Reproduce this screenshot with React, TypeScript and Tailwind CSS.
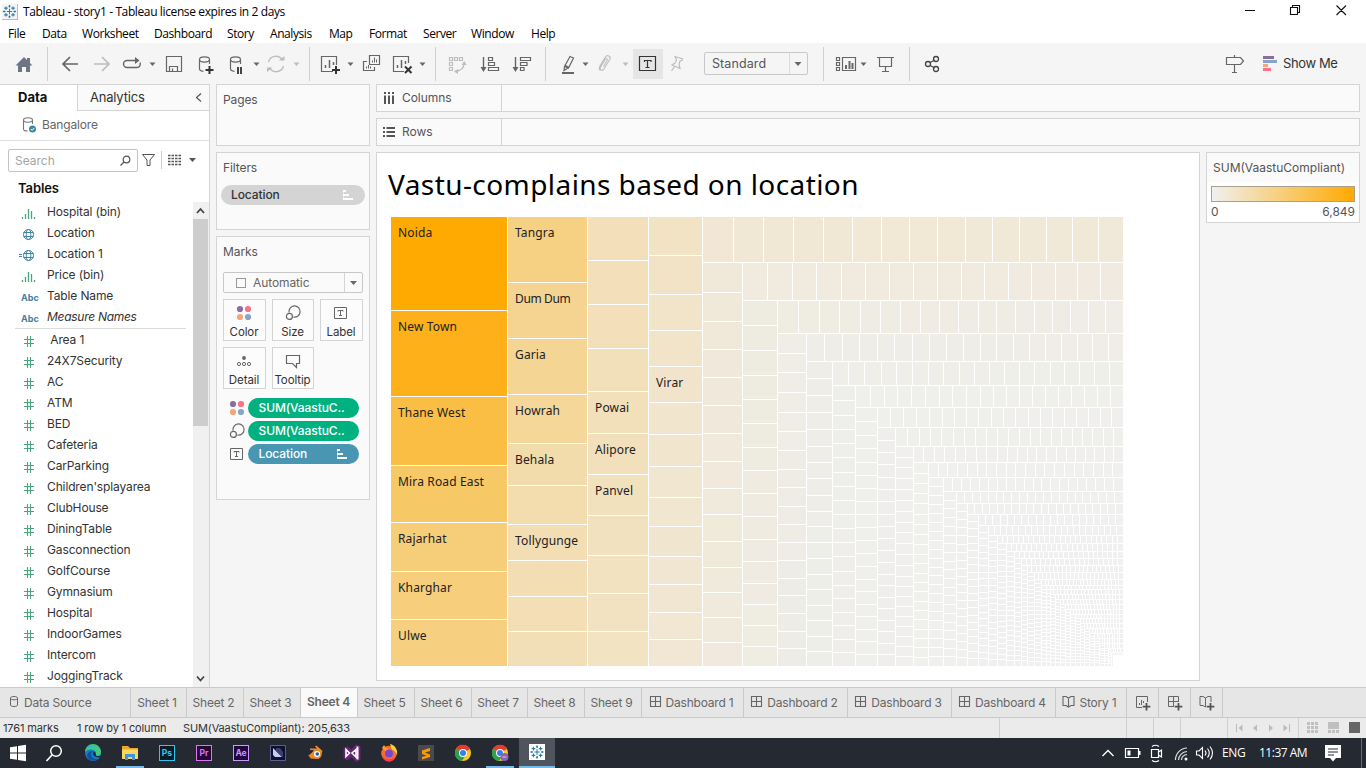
import React from "react";

type Kids = { children?: React.ReactNode };

/* ---------- shared pieces ---------- */

/* Icon cell whose drawing uses window coordinates: x..x+w by y..y+h. */
function Cell({ x, w, y = 43, h = 41, children }: { x: number; w: number; y?: number; h?: number } & Kids) {
  return (
    <svg width={w} height={h} viewBox={`${x} ${y} ${w} ${h}`} fill="none" className="block shrink-0">
      {children}
    </svg>
  );
}

const Caret = ({ x, y = 64, c = "#666" }: { x: number; y?: number; c?: string }) => (
  <path d={`M${x - 3} ${y - 1.5}h6l-3 3.5z`} fill={c} />
);

function TableauMark({ c }: { c: string }) {
  return (
    <g stroke={c} strokeWidth="1.2" fill="none">
      <path d="M8 5v6M5 8h6M8 0.5v3M6.8 2h2.4M8 12.5v3M6.8 14h2.4M0.5 8h3M2 6.8v2.4M12.5 8h3M14 6.8v2.4M4 2.2v4M2 4.2h4M12 2.2v4M10 4.2h4M4 9.8v4M2 11.8h4M12 9.8v4M10 11.8h4" />
    </g>
  );
}

function SortGlyph({ c }: { c: string }) {
  return (
    <svg width="12" height="10" viewBox="0 0 12 10" fill={c} className="block">
      <path d="M1 0h3v2H1zM1 4h6v2H1zM1 8h10v2H1z" />
      <path d="M1 0h1v10H1z" opacity=".5" />
    </svg>
  );
}

const FourDots = () => (
  <svg width="16" height="16" viewBox="0 0 16 16" className="block">
    <circle cx="4" cy="4" r="3.1" fill="#8b6f9b" />
    <circle cx="12" cy="4" r="3.1" fill="#fb7185" />
    <circle cx="4" cy="12" r="3.1" fill="#f2a679" />
    <circle cx="12" cy="12" r="3.1" fill="#86a5cc" />
  </svg>
);
const SizeGlyph = () => (
  <svg width="16" height="16" viewBox="0 0 16 16" fill="none" stroke="#666" strokeWidth="1.2" className="block">
    <path d="M4 7.5A5.6 5.6 0 1 1 8.3 12" />
    <circle cx="4.4" cy="11.4" r="3" />
  </svg>
);
const TextGlyph = () => (
  <svg width="16" height="16" viewBox="0 0 16 16" fill="none" stroke="#666" className="block">
    <path d="M1.5 2.5h12v11h-12z" />
    <path d="M5 6.5v-1h5v1M7.5 5.5v5M6 10.5h3" />
  </svg>
);

/* ---------- toolbar ---------- */

const Sep = () => <div className="mt-1 h-[34px] w-px shrink-0 bg-[#d0d0d0]" />;

function Cylinder({ x }: { x: number }) {
  return (
    <path
      d={`M${x} 59.5c0-3.4 10-3.4 10 0s-10 3.4-10 0v9.5c0 1.4 1.7 2 4 2.3M${x + 10} 59.5v4.5`}
      stroke="#666"
      strokeWidth="1.2"
    />
  );
}

function Toolbar() {
  const g = "#666";
  const l = "#bdbdbd";
  return (
    <div className="flex h-[41px] shrink-0 bg-[#f5f5f5]">
      <Cell x={0} w={47}>
        <path d="M15.500 65.500l8.500-8.500 3 3v-2h3v5l2.500 2.500h-2.500v6.500h-4v-5h-4v5h-4v-6.500z" fill="#6e7683" />
      </Cell>
      <Sep />
      <Cell x={48} w={70}>
        <path d="M78 64H63.500M70 57l-7 7 7 7" stroke={g} strokeWidth="1.700" />
        <path d="M94 64h14.500M102 57l7 7-7 7" stroke={l} strokeWidth="1.700" />
      </Cell>
      <Cell x={118} w={42}>
        <path d="M136 60.500h-9a3.500 3.500 0 0 0 0 7h10a3.500 3.500 0 0 0 3-5" stroke={g} strokeWidth="1.400" />
        <path d="M135 57l4.500 3.500L135 64z" fill={g} />
        <Caret x={152.500} />
      </Cell>
      <Cell x={160} w={32}>
        <path d="M166.500 56.500h15v15h-15zM169.500 71v-4.500h8V71M172.500 68.500v3" stroke={g} strokeWidth="1.200" />
      </Cell>
      <Cell x={192} w={32}>
        <Cylinder x={199.500} />
        <path d="M209.500 66v8M205.500 70h8" stroke="#333" strokeWidth="2" />
      </Cell>
      <Cell x={224} w={38}>
        <Cylinder x={230.500} />
        <path d="M238 67v7M241 67v7" stroke="#333" strokeWidth="1.800" />
        <Caret x={256.500} />
      </Cell>
      <Cell x={262} w={47}>
        <path d="M268.500 62a7.500 7.500 0 0 1 14-1.500M283.500 66a7.500 7.500 0 0 1-14 1.500" stroke={l} strokeWidth="1.400" />
        <path d="M279 60.500h5.500V56zM272.500 67.500H267V72z" fill={l} />
        <Caret x={296.500} c={l} />
      </Cell>
      <Sep />
      <Cell x={310} w={48}>
        <path d="M333 71.500h-11.500v-15h15V65" stroke={g} strokeWidth="1.200" />
        <path d="M325.500 68v-3M329.500 68v-8M333.500 65v-3" stroke={g} strokeWidth="1.500" />
        <path d="M336 66v8M332 70h8" stroke="#333" strokeWidth="2" />
        <Caret x={350.500} />
      </Cell>
      <Cell x={358} w={30}>
        <path d="M369.500 55.500h10v9h-10zM367 61.500h-3.500v9h11V67" stroke={g} strokeWidth="1.200" />
        <path d="M372.500 62.500v-2M374.500 62.500v-5M376.500 62.500v-3M366.500 68.500v-2M368.500 68.500v-3.500M370.500 68.500v-2" stroke={g} />
      </Cell>
      <Cell x={388} w={47}>
        <path d="M404 71.500h-10.500v-15h15V63" stroke={g} strokeWidth="1.200" />
        <path d="M397.500 68v-3M401.500 68v-8M405.500 64v-3" stroke={g} strokeWidth="1.500" />
        <path d="M405 66.500l6.500 6.500M411.500 66.500L405 73" stroke="#333" strokeWidth="2" />
        <Caret x={422.500} />
      </Cell>
      <Sep />
      <Cell x={436} w={37}>
        <path d="M449.500 57.500h3v3h-3zM454.500 57.500h3v3h-3zM459.500 57.500h3v3h-3zM449.500 62.500h3v3h-3zM449.500 67.500h3v3h-3z" stroke={l} strokeWidth="1.200" />
        <path d="M464 63c0 5-3 8-9 8.500" stroke={l} strokeWidth="1.300" />
        <path d="M464.200 61l2.500 4h-5zM454 71.500l4-2.500v5z" fill={l} />
      </Cell>
      <Cell x={473} w={33}>
        <path d="M483.500 57v12" stroke={g} strokeWidth="1.400" />
        <path d="M480.500 67h6l-3 5z" fill={g} />
        <path d="M488.500 57.500h4v3h-4zM488.500 62.500h6v3h-6zM488.500 67.500h10v3h-10z" stroke={g} strokeWidth="1.200" />
      </Cell>
      <Cell x={506} w={39}>
        <path d="M515.500 57v12" stroke={g} strokeWidth="1.400" />
        <path d="M512.500 67h6l-3 5z" fill={g} />
        <path d="M520.500 57.500h10v3h-10zM520.500 62.500h6.500v3h-6.500zM520.500 67.500h3.500v3h-3.500z" stroke={g} strokeWidth="1.200" />
      </Cell>
      <Sep />
      <Cell x={546} w={46}>
        <path d="M562 73h12" stroke={g} strokeWidth="2" />
        <path d="M564.500 66.500l5.500-10 3.500 1.500-5 10zM564.500 66.500l-.5 4 4-2.500M564.500 65l4.500 2.500" stroke={g} strokeWidth="1.200" />
        <Caret x={585.500} />
      </Cell>
      <Cell x={592} w={41}>
        <path
          d="M603.500 66.500l3.700-6.300c.8-1.500-1-2.400-1.900-.9l-4.800 8c-1.300 2.600 1.900 4.200 3.400 1.700l5.800-9.500c1.700-3.400-2.500-5.300-4.300-2.500l-5.600 9.200c-.8 1.700-.6 3.300.3 4.300"
          stroke={l}
          strokeWidth="1.100"
        />
        <Caret x={625.500} c={l} />
      </Cell>
      <div className="mt-[6px] h-[30px] w-[30px] shrink-0 bg-[#e5e5e5]">
        <Cell x={633} w={30} y={49} h={30}>
          <path d="M639.500 56.500h16v14h-16z" stroke="#333" strokeWidth="1.200" />
          <path d="M644.500 62v-1.500h6.500V62M647.500 60.500v7M645.500 67.500h4" stroke="#333" strokeWidth="1.200" />
        </Cell>
      </div>
      <Cell x={663} w={41}>
        <path d="M675 56.500l7.500 2.500-.5 1.500-2 .5-1 3.500 1 4-8-3.500 3-2 1.500-3zM674.500 66.500l-3 4.500" stroke={l} strokeWidth="1.200" />
      </Cell>
      <div className="mt-[9px] flex h-[23px] w-[104px] shrink-0 rounded-[2px] border border-[#c8c8c8] bg-[#f5f5f5]">
        <div className="w-[85px] border-r border-[#dcdcdc] pl-[7px] font-[Inter] text-[12.5px] leading-[21px] tracking-[0.1px] text-[#555]">Standard</div>
        <Cell x={790} w={16} y={53} h={21}>
          <path d="M794.500 62h7l-3.500 4z" fill="#666" />
        </Cell>
      </div>
      <div className="w-[15px] shrink-0" />
      <Sep />
      <Cell x={824} w={46}>
        <path d="M836.500 57.500h3v3h-3zM836.500 62.500h3v3h-3zM836.500 67.500h3v3h-3zM842.500 57.500h13v13h-13z" stroke={g} strokeWidth="1.200" />
        <path d="M846 69v-4M849.500 69v-8M852.500 69v-6" stroke={g} strokeWidth="2" />
        <Caret x={863.500} />
      </Cell>
      <Cell x={870} w={39}>
        <path d="M877 57.500h17M879.500 58v8.500h12V58M885.500 66.500V71M882 71.500h7" stroke={g} strokeWidth="1.200" />
      </Cell>
      <Sep />
      <Cell x={910} w={40}>
        <path d="M930 62.500l5-2.500M930 65.500l5 2.500" stroke="#444" strokeWidth="1.300" />
        <circle cx="928" cy="64" r="2.500" stroke="#444" strokeWidth="1.300" />
        <circle cx="936" cy="59" r="2.500" stroke="#444" strokeWidth="1.300" />
        <circle cx="936" cy="69" r="2.500" stroke="#444" strokeWidth="1.300" />
      </Cell>
      <div className="grow" />
      <Cell x={1216} w={67}>
        <path d="M1226.500 57.500h14l3 3.500-3 3.500h-14zM1234.500 55v2M1234.500 65v7M1232 72.500h5" stroke={g} strokeWidth="1.200" />
        <path d="M1263 56h11v3h-11z" fill="#8b6f9b" />
        <path d="M1263 60h14v3h-14z" fill="#86a5cc" />
        <path d="M1263 64h5v3h-5z" fill="#f2a679" />
        <path d="M1263 68h8v3h-8z" fill="#fb7185" />
      </Cell>
      <div className="w-[83px] shrink-0 font-[Inter] text-[13px] leading-[41px] tracking-[-0.400px] text-[#333]">Show Me</div>
    </div>
  );
}

/* ---------- data pane ---------- */

type FieldKind = "bins" | "globe" | "eqglobe" | "abc" | "hash";

function FieldIcon({ kind }: { kind: FieldKind }) {
  if (kind === "abc")
    return <span className="w-[29px] pt-[3px] pl-[3px] font-[Inter] text-[9px] leading-[16px] font-bold text-[#3f809f]">Abc</span>;
  return (
    <svg width="29" height="16" viewBox="18 0 29 16" fill="none" className="block shrink-0">
      {kind === "bins" && (
        <path d="M22.500 12v2M25.500 9v5M28.500 4v10M31.500 6v8M34.500 12v2" stroke="#4aa57f" strokeWidth="1.300" />
      )}
      {(kind === "globe" || kind === "eqglobe") && (
        <g stroke="#3f87a6">
          <circle cx="28.500" cy="8.500" r="5" />
          <ellipse cx="28.500" cy="8.500" rx="2.300" ry="5" />
          <path d="M23.500 6.500h10M23.500 10.500h10" />
          {kind === "eqglobe" && <path d="M19 7.500h3M19 9.500h3" />}
        </g>
      )}
      {kind === "hash" && <path d="M27.500 3v11M30.500 3v11M24 6.500h10M24 10.500h10" stroke="#4aa57f" strokeWidth="1.100" />}
    </svg>
  );
}

const dimensions: [FieldKind, string][] = [
  ["bins", "Hospital (bin)"],
  ["globe", "Location"],
  ["eqglobe", "Location 1"],
  ["bins", "Price (bin)"],
  ["abc", "Table Name"],
  ["abc", "Measure Names"],
];
const measures = [
  "\u00a0Area 1", "24X7Security", "AC", "ATM", "BED", "Cafeteria", "CarParking", "Children'splayarea", "ClubHouse",
  "DiningTable", "Gasconnection", "GolfCourse", "Gymnasium", "Hospital", "IndoorGames", "Intercom", "JoggingTrack",
];

function Field({ kind, name }: { kind: FieldKind; name: string }) {
  return (
    <div className="flex h-[21px] items-center pl-[18px]">
      <FieldIcon kind={kind} />
      <span
        className={`pb-[2px] font-[Inter] text-[12px] text-[#333] ${name === "Measure Names" ? "tracking-[-0.280px] italic" : "tracking-[-0.130px]"}`}
      >
        {name}
      </span>
    </div>
  );
}

function DataPane() {
  return (
    <div className="flex w-[210px] shrink-0 flex-col border-r border-[#d4d4d4] bg-white font-[Inter]">
      <div className="flex h-[27px] shrink-0">
        <div className="w-[77px] border-t border-[#d4d4d4] pl-[18px] text-[13px] leading-[25px] font-bold text-[#111]">Data</div>
        <div className="flex grow items-center justify-between border border-r-0 border-[#d4d4d4] bg-[#fafafa] pr-[6px] pl-[12px] text-[13px] tracking-[-0.200px] text-[#333]">
          Analytics
          <svg width="8" height="10" viewBox="0 0 8 10" fill="none" stroke="#555" strokeWidth="1.200">
            <path d="M6 0.500L1.500 4.500l4.500 4" />
          </svg>
        </div>
      </div>
      <div className="flex h-[30px] shrink-0 items-center border-b border-[#e0e0e0] pb-px pl-[22px] text-[12px] tracking-[-0.150px] text-[#666]">
        <svg width="20" height="18" viewBox="0 0 20 18" fill="none" className="block">
          <path d="M1.500 4c0-3 9-3 9 0s-9 3-9 0v9c0 1.200 1.500 2 4 2M10.500 4v4" stroke="#777" strokeWidth="1.100" />
          <circle cx="10.500" cy="13" r="3.500" fill="#3f87a6" />
          <path d="M8.800 13l1.300 1.300 2.200-2.400" stroke="#fff" />
        </svg>
        Bangalore
      </div>
      <div className="flex h-[39px] shrink-0 pt-2 pl-2">
        <div className="flex h-[23px] w-[130px] items-center justify-between rounded-[2px] border border-[#c4c4c4] pr-[6px] pl-[6px] text-[12px] text-[#a5a5a5]">
          Search
          <svg width="12" height="12" viewBox="0 0 12 12" fill="none" stroke="#555" strokeWidth="1.200">
            <circle cx="7.500" cy="4.500" r="3.300" />
            <path d="M5 7L1.500 10.500" />
          </svg>
        </div>
        <Cell x={138} w={71} y={149} h={23}>
          <path d="M142.500 154.500h12l-4.500 5.500v5.500h-3V160z" stroke="#555" />
          <path d="M161.500 151v18" stroke="#ccc" />
          <path d="M168 155.500h13M168 158.500h13M168 161.500h13M168 164.500h13" stroke="#555" strokeWidth="1.300" strokeDasharray="2.500 1" />
          <path d="M189 158h7l-3.500 4z" fill="#555" />
        </Cell>
      </div>
      <div className="h-[22px] shrink-0 pl-[18px] text-[13px] leading-[17px] font-semibold tracking-[-0.100px] text-[#111]">Tables</div>
      <div className="flex h-[485px] shrink-0">
        <div className="w-[193px] overflow-hidden">
          {dimensions.map(([k, n]) => (
            <Field key={n} kind={k} name={n} />
          ))}
          <div className="ml-[15px] h-px w-[171px] bg-[#dcdcdc]" />
          <div className="h-px" />
          {measures.map((n) => (
            <Field key={n} kind="hash" name={n} />
          ))}
        </div>
        <div className="flex w-[16px] flex-col bg-[#f0f0f0]">
          <Cell x={193} w={16} y={202} h={17}>
            <path d="M197 213l3.500-4 3.500 4" stroke="#444" strokeWidth="1.800" />
          </Cell>
          <div className="h-[207px] w-[15px] bg-[#cdcdcd]" />
          <div className="grow" />
          <Cell x={193} w={16} y={670} h={17}>
            <path d="M197 676.500l3.500 4 3.500-4" stroke="#444" strokeWidth="1.800" />
          </Cell>
        </div>
      </div>
    </div>
  );
}

/* ---------- cards ---------- */

function MarkButton({ label, children }: { label: string } & Kids) {
  return (
    <div className="flex h-[42px] flex-col items-center border border-[#d4d4d4] bg-[#fcfcfc] pt-[5px] pr-px">
      {children}
      <span className="mt-[4px] text-[11.500px] leading-[15px] tracking-[-0.100px] text-[#333]">{label}</span>
    </div>
  );
}

function Pill({ color, text, sort }: { color: string; text: string; sort?: boolean }) {
  return (
    <div
      className={`flex h-[20px] w-[111px] items-center justify-between rounded-full pr-[11px] pl-[10.500px] text-[12px] font-medium tracking-[-0.100px] text-white ${color}`}
    >
      {text}
      {sort && <SortGlyph c="#fff" />}
    </div>
  );
}

function Cards() {
  const card = "border border-[#d4d4d4] bg-[#fafafa] font-[Inter] text-[12px] tracking-[-0.100px] text-[#555]";
  return (
    <div className="ml-[6px] flex w-[154px] shrink-0 flex-col gap-[6px]">
      <div className={`h-[62px] pt-[6px] pl-[6px] ${card}`}>Pages</div>
      <div className={`h-[78px] px-[4px] pt-[6px] ${card}`}>
        <div className="pl-[2px] leading-[18px]">Filters</div>
        <div className="mt-[8px] flex h-[20px] items-center justify-between rounded-full bg-[#d4d4d4] pr-[11px] pl-[10px] font-medium text-[#333]">
          Location
          <SortGlyph c="#fff" />
        </div>
      </div>
      <div className={`h-[264px] px-[6px] pt-[6px] ${card}`}>
        <div className="leading-[18px]">Marks</div>
        <div className="mt-[11px] flex h-[21px] items-center rounded-[2px] border border-[#c8c8c8] text-[#666]">
          <div className="ml-[12px] h-[10px] w-[10px] border border-[#999]" />
          <span className="ml-[7px] w-[91px]">Automatic</span>
          <Cell x={344} w={18} y={273} h={19}>
            <path d="M344.500 273v19" stroke="#d4d4d4" />
            <path d="M350 281h7l-3.500 4z" fill="#666" />
          </Cell>
        </div>
        <div className="mt-[6px] grid grid-cols-[43px_42px_43px] gap-x-[6px] gap-y-[6px]">
          <MarkButton label="Color"><FourDots /></MarkButton>
          <MarkButton label="Size"><SizeGlyph /></MarkButton>
          <MarkButton label="Label"><TextGlyph /></MarkButton>
          <MarkButton label="Detail">
            <svg width="16" height="16" viewBox="0 0 16 16" fill="none" stroke="#666" className="block">
              <circle cx="8" cy="5" r="1.900" fill="#666" stroke="none" />
              <circle cx="3" cy="11" r="1.600" />
              <circle cx="8" cy="11" r="1.600" />
              <circle cx="13" cy="11" r="1.600" />
            </svg>
          </MarkButton>
          <MarkButton label="Tooltip">
            <svg width="16" height="16" viewBox="0 0 16 16" fill="none" stroke="#666" strokeWidth="1.200" className="block">
              <path d="M1.500 2.500h13v8h-3v4l-4-4h-6z" />
            </svg>
          </MarkButton>
        </div>
        <div className="mt-[9px] flex flex-col gap-[3px] pl-[6px]">
          <div className="flex items-center gap-[3px]"><FourDots /><Pill color="bg-[#00b180]" text="SUM(VaastuC.." /></div>
          <div className="flex items-center gap-[3px]"><SizeGlyph /><Pill color="bg-[#00b180]" text="SUM(VaastuC.." /></div>
          <div className="flex items-center gap-[3px]"><TextGlyph /><Pill color="bg-[#4996b2]" text="Location" sort /></div>
        </div>
      </div>
    </div>
  );
}

/* ---------- treemap ---------- */

type Rect = { x: number; y: number; w: number; h: number; c: string };

const X0 = 391, Y0 = 217, X1 = 1123, Y1 = 666;

/* Strips alternate between the left edge (col) and the top edge (row) of what is left.
   "end" is the gap line that closes the strip, "cuts" the gap lines across it. */
type Strip = { kind: "col" | "row"; end: number; cuts?: number[]; step?: number; colors: string[] };

const strips: Strip[] = [
  { kind: "col", end: 507, cuts: [310, 396, 465, 522, 571, 619], colors: ["#ffaa00", "#fdb019", "#fabe44", "#f7c866", "#f6cd79", "#f6ce7c", "#f6cf80"] },
  { kind: "col", end: 587, cuts: [282, 338, 394, 443, 485, 524, 560, 596, 631], colors: ["#f6d083", "#f5d491", "#f5d593", "#f4d799", "#f3dcac", "#f3dcae", "#f3ddb2", "#f3deb4", "#f3deb6", "#f3dfb7"] },
  { kind: "col", end: 648, cuts: [260, 304, 348, 391, 433, 474, 515, 555, 593, 631], colors: ["#f3dfba", "#f3dfba", "#f3dfba", "#f2e0ba", "#f2e0bb", "#f2e0bc", "#f2e1bd", "#f2e1bf", "#f2e2c0", "#f2e2c1", "#f2e3c3"] },
  { kind: "col", end: 702, cuts: [255, 294, 330, 366, 402, 434, 466, 497, 526, 556, 584, 612, 639], colors: ["#f2e3c4", "#f2e3c6", "#f2e4c8", "#f1e4c9", "#f1e4ca", "#f1e5cd", "#f1e5ce", "#f1e6cf", "#f1e6d0", "#f0e6d0", "#f0e6d1", "#f0e6d1", "#f1e7d3", "#f1e7d4"] },
  { kind: "row", end: 262, cuts: [733, 763, 793, 823, 852, 881, 909, 937, 965, 992, 1019, 1046, 1072, 1098], colors: ["#f2e7d5", "#f0e8d4", "#f0e8d5", "#f0e8d5", "#f0e8d5", "#f1e8d6", "#f1e9d6", "#f1e9d6", "#f1e9d6", "#f1e9d7", "#f1e9d7", "#f0e9d8", "#f0e9d8", "#f0e9d8", "#f0e9d9"] },
  { kind: "col", end: 742, cuts: [292, 321, 349, 377, 405, 433, 461, 488, 514, 541, 567, 592, 617, 642], colors: ["#f0e9d9", "#f0e9da", "#f0e9db", "#f0e9db", "#f1e9dc", "#f0eadc", "#f0eadb", "#f0eadc", "#f0eadc", "#f1e9de"] },
  { kind: "row", end: 300, cuts: [767, 792, 816, 841, 865, 889, 913, 937, 961, 984, 1008, 1031, 1055, 1077, 1100], colors: ["#f1eade", "#f1eade", "#f1eadf", "#f0eadf", "#f1eae0", "#f1eae0"] },
  { kind: "col", end: 777, cuts: [325, 350, 375, 399, 423, 447, 470, 493, 516, 539, 561, 583, 604, 625, 646], colors: ["#eeebe0", "#eeebe0", "#efebe1", "#efebe2", "#efece2"] },
  { kind: "row", end: 333, cuts: [798, 819, 839, 860, 880, 900, 920, 939, 958, 978, 996, 1015, 1034, 1052, 1070, 1088, 1105], colors: ["#efece2", "#efece3", "#f0ece4", "#efece4", "#efece5", "#efede5"] },
  { kind: "col", end: 806, cuts: [353, 372, 392, 412, 431, 450, 469, 487, 506, 524, 542, 560, 578, 595, 613, 631, 648], colors: ["#efede5", "#efece6", "#eeece6"] },
  { kind: "row", end: 361, cuts: [824, 842, 859, 877, 894, 912, 929, 946, 963, 980, 996, 1013, 1029, 1045, 1061, 1077, 1092, 1108], colors: ["#eeede7", "#efede7", "#f0ede8"] },
  { kind: "col", end: 832, cuts: [378, 395, 412, 429, 446, 462, 478, 495, 511, 526, 542, 558, 574, 589, 605, 620, 636, 651], colors: ["#efede8", "#eeeee9"] },
  { kind: "row", end: 385, cuts: [848, 864, 881, 896, 912, 928, 943, 959, 974, 989, 1004, 1019, 1034, 1050, 1064, 1079, 1094, 1109], colors: ["#efeee9", "#efefea"] },
  { kind: "col", end: 855, cuts: [400, 415, 429, 443, 457, 472, 486, 500, 514, 528, 542, 556, 571, 585, 598, 612, 625, 639, 652], colors: ["#eeeeea", "#efeeeb"] },
  { kind: "row", end: 407, cuts: [870, 884, 897, 911, 925, 939, 952, 966, 980, 993, 1006, 1019, 1032, 1045, 1058, 1071, 1084, 1097, 1110], colors: ["#efefeb"] },
  { kind: "col", end: 877, cuts: [421, 435, 448, 462, 475, 488, 501, 514, 527, 540, 553, 566, 579, 591, 604, 616, 629, 641, 654], colors: ["#efefeb", "#efefec"] },
  { kind: "row", end: 427, cuts: [890, 903, 916, 929, 942, 954, 966, 978, 991, 1003, 1015, 1028, 1040, 1052, 1064, 1076, 1088, 1100, 1111], colors: ["#efefec", "#f0efed"] },
  { kind: "col", end: 895, cuts: [440, 452, 464, 477, 489, 501, 514, 526, 538, 550, 562, 574, 585, 597, 608, 620, 631, 643, 654], colors: ["#efeeec"] },
  { kind: "row", end: 446, cuts: [907, 919, 930, 941, 953, 964, 975, 986, 997, 1008, 1019, 1030, 1040, 1051, 1061, 1072, 1082, 1092, 1103, 1113], colors: ["#efefec"] },
  { kind: "col", end: 913, cuts: [457, 467, 478, 489, 500, 511, 522, 532, 543, 554, 565, 576, 586, 596, 606, 616, 626, 636, 646, 656], colors: ["#f0efee"] },
  { kind: "row", end: 462, cuts: [923, 934, 944, 955, 965, 976, 986, 997, 1007, 1017, 1027, 1036, 1046, 1056, 1066, 1075, 1085, 1094, 1104, 1113], colors: ["#f0efee"] },
  { kind: "col", end: 928, cuts: [473, 483, 493, 503, 514, 524, 534, 544, 554, 563, 573, 582, 591, 601, 610, 619, 629, 638, 647, 657], colors: ["#f0f0ed"] },
];

/* Small strips: row line, row pitch, column line, column pitch. */
const tail: [number, number, number, number][] = [
  [477, 9.6, 943, 9], [491, 8.8, 956, 8.8], [503, 8, 967, 8], [514, 7.4, 978, 7.3], [525, 7.1, 988, 6.7],
  [535, 6.2, 997, 6.3], [543, 5.3, 1006, 5.6], [551, 5, 1014, 5], [558, 4.9, 1021, 4.8], [565, 4.7, 1027, 4.6],
  [572, 4.4, 1034, 4.2], [579, 4, 1041, 4], [585, 3.6, 1046, 3.6], [589, 3.6, 1050, 3.6], [594, 3.4, 1055, 3.4],
  [599, 3.3, 1060, 3.3], [604, 3.2, 1065, 3.2], [609, 3.1, 1070, 3.1], [614, 3, 1075, 3], [618, 3, 1080, 3],
  [623, 3, 1084, 3], [628, 3, 1089, 2.8], [633, 2.8, 1094, 2.7], [638, 2.6, 1099, 2.6], [643, 2.5, 1104, 2.5],
  [648, 2.5, 1108, 2.3], [652, 2.3, 1111, 2.2],
];
tail.forEach(([ry, rs, cx, cs], i) => {
  const c = i < 4 ? "#f0f0ee" : "#f0f0f0";
  strips.push({ kind: "row", end: ry, step: rs, colors: [c] });
  strips.push({ kind: "col", end: cx, step: cs, colors: [c] });
});

function buildCells(): Rect[] {
  const out: Rect[] = [];
  let x = X0, y = Y0;
  for (const s of strips) {
    const from = s.kind === "col" ? y : x;
    const to = s.kind === "col" ? Y1 : X1;
    let cuts = s.cuts ?? [];
    if (s.step) {
      const n = Math.max(1, Math.round((to - from) / s.step));
      cuts = Array.from({ length: n - 1 }, (_, i) => Math.round(from + ((i + 1) * (to - from)) / n) - 1);
    }
    const edges = [from, ...cuts.map((v) => v + 1)];
    edges.forEach((a, i) => {
      const b = i < cuts.length ? cuts[i] : to;
      const c = s.colors.length === edges.length ? s.colors[i] : s.colors[Math.floor((i * s.colors.length) / edges.length)];
      out.push(s.kind === "col" ? { x, y: a, w: s.end - x, h: b - a, c } : { x: a, y, w: b - a, h: s.end - y, c });
    });
    if (s.kind === "col") x = s.end + 1;
    else y = s.end + 1;
  }
  out.push({ x: 1112, y: 653, w: 1, h: 13, c: "#f3f3f3" }, { x: 1112, y: 653, w: 11, h: 2, c: "#f5f5f5" });
  return out;
}

const cells = buildCells();

const labels: [number, number, string][] = [
  [398, 237, "Noida"], [398, 331, "New Town"], [398, 417, "Thane West"], [398, 486, "Mira Road East"], [398, 543, "Rajarhat"],
  [398, 592, "Kharghar"], [398, 640, "Ulwe"], [515, 237, "Tangra"], [515, 303, "Dum Dum"], [515, 359, "Garia"],
  [515, 415, "Howrah"], [515, 464, "Behala"], [515, 545, "Tollygunge"], [595, 412, "Powai"], [595, 454, "Alipore"],
  [595, 495, "Panvel"], [656, 387, "Virar"],
];

function Treemap() {
  return (
    <svg width={X1 - X0} height={Y1 - Y0} viewBox={`${X0} ${Y0} ${X1 - X0} ${Y1 - Y0}`} className="ml-[14px] block">
      {cells.map((r, i) => (
        <rect key={i} x={r.x} y={r.y} width={Math.max(0, r.w)} height={Math.max(0, r.h)} fill={r.c} />
      ))}
      {labels.map(([x, y, t]) => (
        <text
          key={t}
          x={x}
          y={y}
          fill="#222"
          className={`font-['Noto_Sans'] text-[12px] ${t === "Dum Dum" ? "tracking-[-0.350px]" : "tracking-[0.150px]"}`}
        >
          {t}
        </text>
      ))}
    </svg>
  );
}

/* ---------- worksheet area ---------- */

function Shelf({ name, children }: { name: string } & Kids) {
  return (
    <div className="flex h-[28px] shrink-0 border border-[#d4d4d4] bg-[#fafafa] font-[Inter] text-[12px] tracking-[-0.050px] text-[#555]">
      <div className="flex w-[125px] items-center gap-[7px] border-r border-[#d4d4d4] pl-[6px]">
        <svg width="12" height="12" viewBox="0 0 12 12" className="block" stroke="#555" strokeWidth="2">
          {children}
        </svg>
        {name}
      </div>
    </div>
  );
}

function Worksheet() {
  return (
    <div className="ml-[6px] flex w-[984px] shrink-0 flex-col gap-[6px]">
      <Shelf name="Columns">
        <path d="M2 0v2M6 0v2M10 0v2M2 3.500V12M6 3.500V12M10 3.500V12" />
      </Shelf>
      <Shelf name="Rows">
        <path d="M0 2h2M0 6h2M0 10h2M3.500 2H12M3.500 6H12M3.500 10H12" />
      </Shelf>
      <div className="flex gap-[6px]">
        <div className="h-[529px] w-[824px] border border-[#d4d4d4] bg-white">
          <div className="h-[64px] pl-[11px] font-['Noto_Sans'] text-[28px] leading-[62px] tracking-[0.430px] whitespace-nowrap text-black">
            Vastu-complains based on location
          </div>
          <Treemap />
        </div>
        <div className="flex h-[71px] w-[154px] flex-col border border-[#d4d4d4] bg-white font-[Inter] text-[12px] text-[#555]">
          <div className="h-[29px] bg-[#fafafa] pl-[6px] leading-[30px] whitespace-nowrap">SUM(VaastuCompliant)</div>
          <div className="mx-[4px] mt-[4px] h-[16px] border border-[#aaa08c] bg-linear-to-r/srgb from-[#f0f0f0] to-[#ffaa00]" />
          <div className="flex justify-between px-[4px] leading-[19px]">
            <span>0</span>
            <span>6,849</span>
          </div>
        </div>
      </div>
    </div>
  );
}

/* ---------- sheet tabs and status bar ---------- */

const gridIcon = <path d="M1.500 1.500h10v10h-10zM6.500 1.500v10M1.500 6.500h10" />;
const bookIcon = <path d="M1 1.500h3l2.500 1.500L9 1.500h3v9H9L6.500 12 4 10.500H1zM6.500 3v9" />;

function Tab({ w, label, active, icon }: { w: string; label?: string; active?: boolean; icon?: React.ReactNode }) {
  return (
    <div
      className={`flex shrink-0 items-center justify-center gap-[4px] border-r border-[#cacaca] whitespace-nowrap ${w} ${active ? "bg-[#fafafa] pr-px pb-[2px] font-semibold" : "pr-[3px]"}`}
    >
      {icon && (
        <svg width="13" height="13" viewBox="0 0 13 13" fill="none" stroke="#666" strokeWidth="1.100" className="mb-[2px] block shrink-0">
          {icon}
        </svg>
      )}
      {label}
    </div>
  );
}

function AddTab({ w, children }: { w: string } & Kids) {
  return (
    <div className={`flex shrink-0 items-center justify-center border-r border-[#cacaca] ${w}`}>
      <svg width="16" height="16" viewBox="0 0 16 16" fill="none" stroke="#666" className="block">
        {children}
        <path d="M11.500 8v7.500M7.700 11.700h7.600" stroke="#555" strokeWidth="1.800" />
      </svg>
    </div>
  );
}

function SheetTabs() {
  return (
    <div className="flex h-[31px] shrink-0 border-y border-[#cacaca] bg-[#e6e6e6] font-[Inter] text-[12px] tracking-[-0.200px] text-[#666]">
      <div className="flex w-[131px] shrink-0 items-center gap-[5px] border-r border-[#cacaca] pl-[9px]">
        <svg width="10" height="13" viewBox="0 0 10 13" fill="none" stroke="#666" className="mb-[2px] block">
          <path d="M1.500 3c0-2 7-2 7 0v7c0 2-7 2-7 0zM1.500 3.500c0 1.700 7 1.700 7 0" />
        </svg>
        Data Source
      </div>
      <Tab w="w-[56px]" label="Sheet 1" />
      <Tab w="w-[57px]" label="Sheet 2" />
      <Tab w="w-[57px]" label="Sheet 3" />
      <Tab w="w-[57px]" label="Sheet 4" active />
      <Tab w="w-[57px]" label="Sheet 5" />
      <Tab w="w-[57px]" label="Sheet 6" />
      <Tab w="w-[56px]" label="Sheet 7" />
      <Tab w="w-[57px]" label="Sheet 8" />
      <Tab w="w-[57px]" label="Sheet 9" />
      <Tab w="w-[102px]" label="Dashboard 1" icon={gridIcon} />
      <Tab w="w-[104px]" label="Dashboard 2" icon={gridIcon} />
      <Tab w="w-[104px]" label="Dashboard 3" icon={gridIcon} />
      <Tab w="w-[104px]" label="Dashboard 4" icon={gridIcon} />
      <Tab w="w-[71px]" label="Story 1" icon={bookIcon} />
      <AddTab w="w-[32px]">
        <path d="M7 12.500H1.500v-11h11V7M4.500 10V8M6.500 10V5M8.500 8V6" />
      </AddTab>
      <AddTab w="w-[32px]">
        <path d="M7 11.500H1.500v-10h10V7M6.500 1.500v10M1.500 6.500h10" />
      </AddTab>
      <AddTab w="w-[32px]">
        <path d="M6.500 12L4 10.500H1v-9h3L6.500 3 9 1.500h3V7M6.500 3v9" />
      </AddTab>
    </div>
  );
}

function StatusBar() {
  return (
    <div className="flex h-[20px] shrink-0 bg-[#ebebeb] font-[Inter] text-[11px] leading-[20px] tracking-[-0.130px] text-[#333]">
      <span className="w-[74px] pl-[3px]">1761 marks</span>
      <span className="w-[105px] pl-[3px]">1 row by 1 column</span>
      <span className="grow pl-[4px]">SUM(VaastuCompliant): 205,633</span>
      <Cell x={999} w={367} y={718} h={20}>
        <path d="M999.500 718v20M1126.500 718v20M1153.500 718v20M1180.500 718v20M1227.500 718v20M1298.500 718v20" stroke="#d0d0d0" />
        <path d="M1242.500 724.500v7l-4-3.500zM1257 724.500v7l-4-3.500zM1269 724.500v7l4-3.500zM1283.500 724.500v7l4-3.500z" fill="#bbb" />
        <path d="M1236.500 724v8M1289.500 724v8" stroke="#bbb" />
        <path d="M1307 722h3v3h-3zM1311 722h3v3h-3zM1315 722h3v3h-3zM1307 726h3v3h-3zM1311 726h3v3h-3zM1315 726h3v3h-3zM1307 730h3v3h-3zM1311 730h3v3h-3zM1315 730h3v3h-3zM1328 722h11v7h-11zM1328 730h3v3h-3zM1332 730h3v3h-3zM1336 730h3v3h-3z" fill="#c0c0c0" />
        <path d="M1349 722h11v11h-11z" fill="#666" />
      </Cell>
    </div>
  );
}

/* ---------- taskbar ---------- */

function AdobeTile({ t, c, bg }: { t: string; c: string; bg: string }) {
  return (
    <div className="flex w-[37px] shrink-0 items-center justify-center pr-px">
      <div className={`flex h-[16px] w-[16px] items-center justify-center border font-[Inter] text-[8.500px] leading-none font-bold ${c} ${bg}`}>{t}</div>
    </div>
  );
}

function Chrome({ x, badge }: { x: number; badge?: boolean }) {
  return (
    <Cell x={x - 18} w={37} y={738} h={30}>
      <circle cx={x} cy="753" r="8" fill="#f9c823" />
      <path d={`M${x} 753L${x - 7} 749a8 8 0 0 1 14 0z`} fill="#e33b2e" />
      <path d={`M${x} 753l-7-4a8 8 0 0 0 6 12l4-6z`} fill="#2ba24c" />
      <circle cx={x} cy="753" r="4" fill="#fff" />
      <circle cx={x} cy="753" r="3" fill="#3b7ded" />
      {badge && <circle cx={x + 4.500} cy="757" r="4" fill="#8a63b8" />}
      {badge && <path d={`M${x + 2.500} 757h4`} stroke="#d9c8ee" />}
      {badge && <path d={`M${x - 14} 767h28`} stroke="#76b9ed" strokeWidth="2" />}
    </Cell>
  );
}

function Taskbar() {
  return (
    <div className="flex h-[30px] shrink-0 bg-[#252932]">
      <Cell x={0} w={36} y={738} h={30}>
        <path d="M10 747.200l7-1v6.300h-7zM18 746l8-1.200v7.700h-8zM10 753.500h7v6.300l-7-1zM18 753.500h8v7.700l-8-1.200z" fill="#fff" />
      </Cell>
      <Cell x={36} w={38} y={738} h={30}>
        <circle cx="56" cy="751" r="5.300" stroke="#fff" strokeWidth="1.500" />
        <path d="M52 755l-5.500 6" stroke="#fff" strokeWidth="1.700" />
      </Cell>
      <Cell x={74} w={38} y={738} h={30}>
        <circle cx="93" cy="753" r="8" fill="#1b79cf" />
        <path d="M85 752a8 8 0 0 1 16 0c0 3-2 4-4 4-3 0-1-1-1-3 0-4-8-5-11-1z" fill="#3ccb83" />
        <path d="M85 752a8 8 0 0 1 12-5.500c-5-.5-10 1-12 5.500z" fill="#31b5d5" />
        <path d="M93 751c-4 3-1 9 5 8-2 2-6 2-8 1-5-3-3-9 3-9z" fill="#12529c" />
        <path d="M94 751.500c-2 2-1 6 5.500 6l1.500-2c-4 1.500-6 0-5-2z" fill="#252932" />
      </Cell>
      <Cell x={112} w={37} y={738} h={30}>
        <path d="M122 746h6l2 2h8v11h-16z" fill="#e9a92b" />
        <path d="M122 749.500h16v9.500h-16z" fill="#fcd462" />
        <path d="M125 760v-6h10v6h-3v-3h-4v3z" fill="#3f96dc" />
        <path d="M116 767h28" stroke="#76b9ed" strokeWidth="2" />
      </Cell>
      <AdobeTile t="Ps" c="text-[#31c5f0] border-[#31c5f0]" bg="bg-[#0a1d26]" />
      <AdobeTile t="Pr" c="text-[#d577f5] border-[#d577f5]" bg="bg-[#2a0634]" />
      <AdobeTile t="Ae" c="text-[#cf96fd] border-[#cf96fd]" bg="bg-[#1f0740]" />
      <Cell x={260} w={37} y={738} h={30}>
        <path d="M270.500 745.500h15v15h-15z" fill="#0d1030" stroke="#5a5f94" />
        <path d="M273 748l9 9h-7l-2-2z" fill="#c9cdf4" />
        <path d="M276 748h4l3 4v5h-1l-6-6z" fill="#3c4070" />
      </Cell>
      <Cell x={297} w={37} y={738} h={30}>
        <path d="M308 756l7-6h-5v-1.500h7l-2-2 1.500-1 6 5.500-4 8-8-.5-1-2z" fill="#ec8a26" />
        <circle cx="317" cy="754" r="4.800" fill="#ec8a26" />
        <circle cx="317" cy="754" r="3" fill="#fff" />
        <circle cx="317.300" cy="754" r="1.800" fill="#235a9b" />
      </Cell>
      <Cell x={334} w={37} y={738} h={30}>
        <path d="M343.500 748l4-2 4 3.500 4.500-5 4.500 1.500v14l-4.500 2-4.500-5-4 3.500-4-2z" fill="#68217a" />
        <path d="M346 749.500v7l3.500-3.500zM356 749.500l-4 3.500 4 4z" stroke="#fff" strokeWidth="1.600" />
        <path d="M357.500 746.500v13" stroke="#fff" strokeWidth="2" />
      </Cell>
      <Cell x={371} w={37} y={738} h={30}>
        <circle cx="389" cy="753.500" r="7.800" fill="#fb6a2a" />
        <path d="M390 744c5 1 8 6 7 11-1-3-3-5-5-5z" fill="#fdd03b" />
        <path d="M382 748l2-3 2 3 3 1-3 3z" fill="#fc9e2a" />
        <circle cx="389" cy="753.500" r="4" fill="#7747d1" />
        <path d="M382 755c2 5 9 6 13 2-2 7-12 6-13-2z" fill="#f43a50" />
      </Cell>
      <Cell x={408} w={37} y={738} h={30}>
        <path d="M418 745h16v16h-16z" fill="#4a4a4a" />
        <path d="M422 750.500l8-2.500v3l-8 2.500zM422 751.500l8 3v2.500l-8-3zM422 757l8-2.500v2.500l-8 2.500z" fill="#ff9800" />
      </Cell>
      <Chrome x={463} />
      <Chrome x={500} badge />
      <div className="flex w-[36px] shrink-0 items-center justify-center border-b-2 border-[#76b9ed] bg-[#50545c] pb-px">
        <svg width="16" height="16" viewBox="-1 -1 18 18" className="block bg-white">
          <TableauMark c="#2f7ba4" />
        </svg>
      </div>
      <div className="grow" />
      <Cell x={1094} w={128} y={738} h={30}>
        <path d="M1102.500 756l5.500-5.500 5.500 5.500" stroke="#fff" strokeWidth="1.300" />
        <path d="M1125.500 748.500h13v9h-13z" stroke="#fff" strokeWidth="1.200" />
        <path d="M1127.500 750.500h3v5h-3zM1139 751h1.500v4h-1.500z" fill="#fff" />
        <path d="M1151.500 749.500h7v8h-7zM1158.500 752l3-2v7l-3-2M1152 746.500q3.500-2.500 7 0M1152 760.500q3.500 2.500 7 0" stroke="#fff" strokeWidth="1.200" />
        <path d="M1175.500 760a12 12 0 0 1 11.500-12M1178.500 760a9 9 0 0 1 8.500-8.500M1181.500 760a6 6 0 0 1 5.500-5.500" stroke="#ddd" strokeWidth="1.200" />
        <circle cx="1186" cy="759" r="1.500" fill="#fff" />
        <path d="M1196.500 751v4h2.500l3.500 3.500v-11L1199 751zM1205 750.500q2 2.500 0 5M1207.500 748.500q3.500 4.500 0 9M1210 746.500q5 6.500 0 13" stroke="#fff" strokeWidth="1.100" />
      </Cell>
      <span className="w-[37px] font-['Open_Sans'] text-[12px] leading-[29px] tracking-[-0.400px] text-white">ENG</span>
      <span className="w-[60px] font-['Open_Sans'] text-[12px] leading-[29px] tracking-[-0.500px] whitespace-nowrap text-white">11:37 AM</span>
      <Cell x={1319} w={47} y={738} h={30}>
        <path d="M1325 745h16v13h-5l-3 3.500-3-3.500h-5z" fill="#fff" />
        <path d="M1328 749h10M1328 752h10M1328 755h6" stroke="#252932" />
        <path d="M1361.500 738v30" stroke="#666b73" />
      </Cell>
    </div>
  );
}

/* ---------- window ---------- */

const menus: [string, string][] = [
  ["File", "w-[34px]"], ["Data", "w-[40px]"], ["Worksheet", "w-[72px]"], ["Dashboard", "w-[73px]"], ["Story", "w-[43px]"],
  ["Analysis", "w-[59px]"], ["Map", "w-[40px]"], ["Format", "w-[54px]"], ["Server", "w-[48px]"], ["Window", "w-[60px]"], ["Help", "w-[40px]"],
];

export default function App() {
  return (
    <div className="flex h-[768px] w-[1366px] flex-col overflow-hidden bg-[#f5f5f5]">
      <div className="flex h-[24px] shrink-0 items-center bg-white">
        <svg width="16" height="16" viewBox="-0.500 -0.500 17 17" className="mr-[5px] ml-[2px] block border-r border-b border-[#bbb] bg-[#f4f4f4]">
          <TableauMark c="#2f7ba4" />
        </svg>
        <span className="font-['Open_Sans'] text-[12px] tracking-[-0.380px] text-black">Tableau - story1 - Tableau license expires in 2 days</span>
        <div className="grow" />
        <Cell x={1236} w={130} y={0} h={24}>
          <path d="M1245 10.500h10M1290.500 7.500h7v7h-7zM1292.500 7v-1.500h7v7H1298M1336.500 5.500l9.500 9.500M1346 5.500l-9.500 9.500" stroke="#111" strokeWidth="1.100" />
        </Cell>
      </div>
      <div className="flex h-[19px] shrink-0 bg-white pl-[8px] font-['Open_Sans'] text-[12px] leading-[19px] tracking-[-0.420px] text-black">
        {menus.map(([m, w]) => (
          <span key={m} className={`shrink-0 ${w}`}>{m}</span>
        ))}
      </div>
      <Toolbar />
      <div className="flex h-[603px] shrink-0">
        <DataPane />
        <Cards />
        <Worksheet />
      </div>
      <SheetTabs />
      <StatusBar />
      <Taskbar />
    </div>
  );
}
